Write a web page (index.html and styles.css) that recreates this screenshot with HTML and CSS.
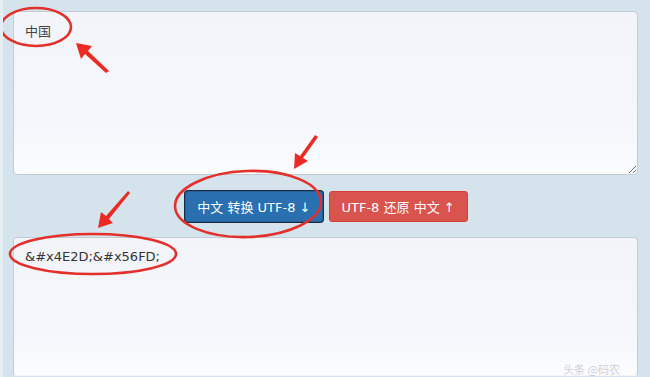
FILE: index.html
```html
<!DOCTYPE html>
<html lang="zh-CN">
<head>
    <meta charset="UTF-8">
    <meta name="viewport" content="width=device-width, initial-scale=1.0">
    <title>中文 UTF-8 转换</title>
    <link rel="stylesheet" href="styles.css">
</head>
<body>

    <div class="converter">
        <!-- Source text -->
        <textarea class="text-box source" id="source">中国</textarea>

        <!-- Actions -->
        <div class="actions">
            <button class="btn btn-primary is-focused" id="encode">中文 转换 UTF-8 ↓</button>
            <button class="btn btn-danger" id="decode">UTF-8 还原 中文 ↑</button>
        </div>

        <!-- Result -->
        <textarea class="text-box result" id="result">&amp;#x4E2D;&amp;#x56FD;</textarea>
    </div>

    <!-- Red marks drawn on the screenshot -->
    <svg class="marks" width="650" height="377" viewBox="0 0 650 377">
        <g fill="none" stroke="#e3302b" stroke-width="2.6">
            <ellipse cx="36" cy="27" rx="35" ry="19"/>
            <ellipse cx="248" cy="204" rx="73" ry="33" transform="rotate(-2 248 204)"/>
            <ellipse cx="93" cy="254" rx="83" ry="20"/>
        </g>
        <g fill="#ec2a24">
            <path d="M76 43 L92 46 L88 51 L109 71 L106 73 L85 54 L81 59 Z"/>
            <path d="M294 169 L295 153 L300 156 L315 135 L318 137 L303 158 L308 161 Z"/>
            <path d="M98 228 L101 212 L106 216 L128 191 L130 193 L109 219 L113 223 Z"/>
        </g>
    </svg>

    <div class="watermark">头条 @码农</div>

</body>
</html>
```

FILE: styles.css
```css
html {
    overflow: hidden;
}
body {
    margin: 0;
    padding: 11px 12px 0 10px;
    background-color: #d5e4ec;
    border-left: 3px solid #e4eef3;
    font-family: 'DejaVu Sans', 'Noto Sans CJK SC', sans-serif;
    height: 377px;
    box-sizing: border-box;
    overflow: hidden;
    position: relative;
}

/* Text boxes */
.text-box {
    display: block;
    width: 625px;
    box-sizing: border-box;
    padding: 10px 11px;
    border: 1px solid #c3ccd4;
    border-radius: 4px;
    background: linear-gradient(#f3f4fa, #f6f7fc 70%, #fbfcfe);
    color: #333;
    font-family: 'DejaVu Sans', 'Noto Sans CJK SC', sans-serif;
    font-size: 13px;
    line-height: 18px;
    outline: none;
}
.source {
    height: 164px;
    resize: vertical;
    font-family: 'Noto Sans CJK SC', sans-serif;
    color: #444;
}
.result {
    height: 139px;
    margin-top: 15px;
    resize: none;
    border-bottom-color: transparent;
}

/* Buttons */
.actions {
    display: flex;
    justify-content: center;
    gap: 6px;
    margin-top: 16px;
    padding-left: 2px;
}
.btn {
    height: 31px;
    padding: 0 12px;
    border: 1px solid transparent;
    border-radius: 3px;
    color: #fff;
    font-family: 'DejaVu Sans', 'Noto Sans CJK SC', sans-serif;
    font-size: 13px;
    cursor: pointer;
}
.btn-primary {
    background-color: #2a6fb0;
    border-color: #245f98;
    padding: 0 11px;
}
.btn-primary.is-focused {
    box-shadow: 0 0 0 1px #1c2a3d;
}
.btn-danger {
    background-color: #d9534f;
    border-color: #d43f3a;
}

/* Overlay */
.marks {
    position: absolute;
    top: 0;
    left: -3px;
    pointer-events: none;
}
.watermark {
    position: absolute;
    right: 30px;
    bottom: 1px;
    font-family: 'Noto Sans CJK SC', sans-serif;
    font-size: 11px;
    line-height: 13px;
    color: rgba(120, 120, 120, 0.35);
}
```
